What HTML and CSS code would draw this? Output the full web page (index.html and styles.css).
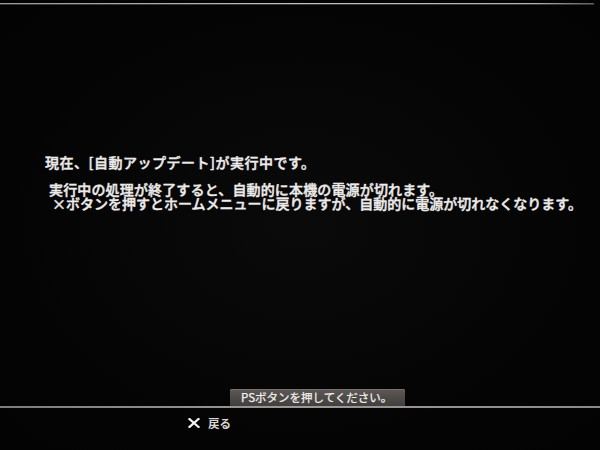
FILE: index.html
```html
<!DOCTYPE html>
<html lang="ja">
<head>
<meta charset="utf-8">
<link rel="stylesheet" href="styles.css">
</head>
<body>
<div class="screen">
  <div class="topline"></div>
  <div class="message">
    <p class="lead">現在、[自動アップデート]が実行中です。</p>
    <p class="detail first">実行中の処理が終了すると、自動的に本機の電源が切れます。</p>
    <p class="detail second">×ボタンを押すとホームメニューに戻りますが、自動的に電源が切れなくなります。</p>
  </div>
  <div class="footer">
    <div class="tabrow">
      <div class="tab">PSボタンを押してください。</div>
    </div>
    <div class="rule"></div>
    <div class="nav">
      <svg class="navx" width="12" height="10" viewBox="0 0 12 10" aria-hidden="true">
        <path d="M1.5 1 L10.5 9 M10.5 1 L1.5 9" stroke="#f4f4f4" stroke-width="2.2" stroke-linecap="square" fill="none"/>
      </svg>
      <span class="navlabel">戻る</span>
    </div>
  </div>
</div>
</body>
</html>
```

FILE: styles.css
```css
html, body {
  margin: 0;
  padding: 0;
}
body {
  width: 600px;
  height: 450px;
  overflow: hidden;
  background: #060505;
  font-family: "Noto Sans CJK JP", "Noto Sans", sans-serif;
  color: #ecebea;
}
.screen {
  height: 450px;
  display: flex;
  flex-direction: column;
  background: radial-gradient(ellipse at 50% 50%, #0b0a0a 0%, #050404 70%, #030303 100%);
}
.topline {
  margin-top: 3px;
  margin-right: 6px;
  height: 1px;
  background: linear-gradient(90deg, #9a9896 0%, #c2c0be 50%, #b4b2b0 90%, #5a5958 100%);
  box-shadow: 0 1px 0 #3a3938;
}
.message {
  margin-top: 151px;
}
.message p {
  margin: 0;
  font-size: 14px;
  line-height: 14px;
  white-space: nowrap;
  font-weight: 500;
  -webkit-text-stroke: 0.35px #ecebea;
  text-shadow: 0 0 1px rgba(255,255,255,0.3);
}
.lead {
  padding-left: 45px;
  letter-spacing: 0.5px;
}
.detail.first {
  margin-top: 13px !important;
  padding-left: 49px;
  letter-spacing: 0.15px;
}
.detail.second {
  padding-left: 52px;
}
.footer {
  margin-top: auto;
  height: 61px;
  display: flex;
  flex-direction: column;
}
.tabrow {
  height: 17px;
  display: flex;
}
.tab {
  margin-left: 230px;
  width: 164px;
  height: 17px;
  padding-left: 11px;
  display: flex;
  align-items: center;
  font-size: 11.5px;
  line-height: 11px;
  color: #f2f1f0;
  white-space: nowrap;
  -webkit-text-stroke: 0.25px #f2f1f0;
  background: linear-gradient(180deg, #5e5957 0%, #4c4846 60%, #433f3e 100%);
  border-radius: 2px 2px 0 0;
  box-shadow: inset 0 1px 0 #76716e;
}
.rule {
  height: 2px;
  background: linear-gradient(90deg, #7e7c7b 0%, #9c9a99 50%, #8c8a89 100%);
}
.nav {
  margin-top: 9px;
  padding-left: 188px;
  display: flex;
  align-items: center;
  gap: 8px;
  height: 12px;
}
.navx {
  display: block;
}
.navlabel {
  font-size: 11.5px;
  line-height: 12px;
  font-weight: bold;
  color: #d8d6d6;
}
```
